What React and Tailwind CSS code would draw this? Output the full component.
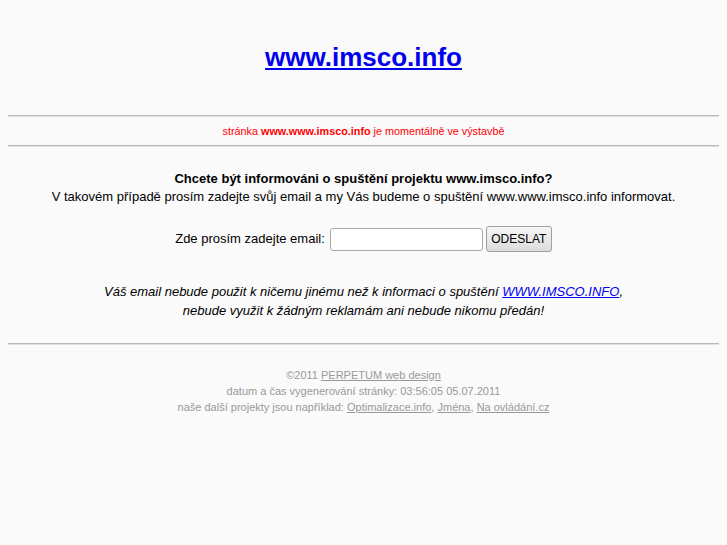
export default function App() {
  return (
    <div className="min-h-[545px] bg-[#fafafa] px-2 pt-[41px] text-center font-['Liberation_Sans',Arial,sans-serif] text-[#000]">
      <h1 className="text-[26px] font-bold leading-[32px]">
        <a href="#" className="text-[#0000ee] underline">www.imsco.info</a>
      </h1>

      <hr className="mt-[42px] border-t border-b border-t-[#b8b8b8] border-b-[#e0e0e0]" />
      <p className="py-[6px] text-[10.8px] leading-[16px] text-[#ff0000]">
        stránka <b>www.www.imsco.info</b> je momentálně ve výstavbě
      </p>
      <hr className="border-t border-b border-t-[#b8b8b8] border-b-[#e0e0e0]" />

      <p className="mt-[23px] text-[13px] font-bold leading-[18px]">
        Chcete být informováni o spuštění projektu www.imsco.info?
      </p>
      <p className="text-[13px] leading-[18px]">
        V takovém případě prosím zadejte svůj email a my Vás budeme o spuštění www.www.imsco.info informovat.
      </p>

      <form className="mt-[20px] flex items-center justify-center text-[13px]" onSubmit={(e) => e.preventDefault()}>
        <label className="mr-[5px]">Zde prosím zadejte email:</label>
        <input
          type="text"
          className="h-[23px] w-[153px] rounded-[3px] border border-[#a9a9a9] bg-white px-1"
        />
        <button
          type="submit"
          className="ml-[3px] h-[26px] w-[66px] rounded-[3px] border border-[#a0a0a0] bg-gradient-to-b from-[#f6f6f6] to-[#dcdcdc] text-[12px]"
        >
          ODESLAT
        </button>
      </form>

      <div className="mt-[30px] text-[13px] italic leading-[19px]">
        <p>
          Váš email nebude použit k ničemu jinému než k informaci o spuštění{' '}
          <a href="#" className="text-[#0000ee] underline">WWW.IMSCO.INFO</a>,
        </p>
        <p>nebude využit k žádným reklamám ani nebude nikomu předán!</p>
      </div>

      <hr className="mt-[23px] border-t border-b border-t-[#b8b8b8] border-b-[#e0e0e0]" />

      <div className="mt-[22px] text-[11px] leading-[16px] text-[#999]">
        <p>
          ©2011 <a href="#" className="underline">PERPETUM web design</a>
        </p>
        <p>datum a čas vygenerování stránky: 03:56:05 05.07.2011</p>
        <p>
          naše další projekty jsou například: <a href="#" className="underline">Optimalizace.info</a>,{' '}
          <a href="#" className="underline">Jména</a>, <a href="#" className="underline">Na ovládání.cz</a>
        </p>
      </div>
    </div>
  );
}
